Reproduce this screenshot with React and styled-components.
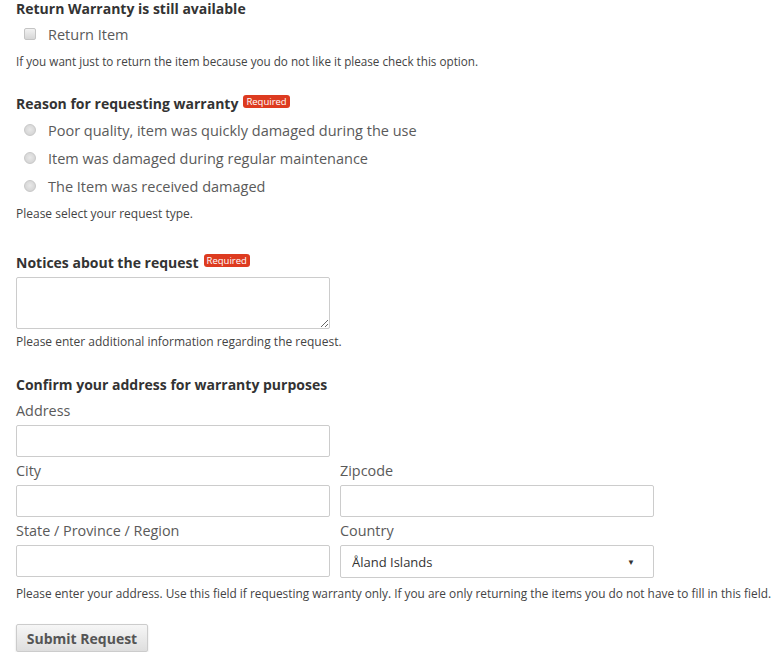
import React, { useState } from "react";
import styled, { createGlobalStyle } from "styled-components";

const GlobalStyle = createGlobalStyle`
  body {
    margin: 0;
    background: #fff;
    font-family: "Open Sans", "Liberation Sans", sans-serif;
    color: #333;
  }
`;

const reasons = [
  "Poor quality, item was quickly damaged during the use",
  "Item was damaged during regular maintenance",
  "The Item was received damaged",
];

const countries = ["Åland Islands", "Albania", "Algeria", "Andorra"];

const App = () => {
  const [reason, setReason] = useState("");
  const [returnItem, setReturnItem] = useState(false);
  const [country, setCountry] = useState(countries[0]);

  return (
    <>
      <GlobalStyle />
      <Form onSubmit={(e) => e.preventDefault()}>
        <Section $gap={26}>
          <Heading>Return Warranty is still available</Heading>
          <CheckRow>
            <Checkbox
              type="checkbox"
              checked={returnItem}
              onChange={(e) => setReturnItem(e.target.checked)}
            />
            <OptionText>Return Item</OptionText>
          </CheckRow>
          <Help $top={9} $size={11.7}>
            If you want just to return the item because you do not like it
            please check this option.
          </Help>
        </Section>

        <Section $gap={32}>
          <Heading>
            Reason for requesting warranty <Badge>Required</Badge>
          </Heading>
          <RadioList>
            {reasons.map((r) => (
              <RadioRow key={r}>
                <Radio
                  type="radio"
                  name="reason"
                  checked={reason === r}
                  onChange={() => setReason(r)}
                />
                <OptionText>{r}</OptionText>
              </RadioRow>
            ))}
          </RadioList>
          <Help $top={6}>Please select your request type.</Help>
        </Section>

        <Section $gap={26}>
          <Heading>
            Notices about the request <Badge>Required</Badge>
          </Heading>
          <TextArea />
          <Help $top={5}>
            Please enter additional information regarding the request.
          </Help>
        </Section>

        <Section $gap={23}>
          <Heading>Confirm your address for warranty purposes</Heading>
          <FieldGrid>
            <Field>
              <FieldLabel>Address</FieldLabel>
              <Input type="text" />
            </Field>
            <Spacer />
            <Field>
              <FieldLabel>City</FieldLabel>
              <Input type="text" />
            </Field>
            <Field>
              <FieldLabel>Zipcode</FieldLabel>
              <Input type="text" />
            </Field>
            <Field>
              <FieldLabel>State / Province / Region</FieldLabel>
              <Input type="text" />
            </Field>
            <Field>
              <FieldLabel>Country</FieldLabel>
              <SelectWrap>
                <Select
                  value={country}
                  onChange={(e) => setCountry(e.target.value)}
                >
                  {countries.map((c) => (
                    <option key={c}>{c}</option>
                  ))}
                </Select>
                <Arrow>▼</Arrow>
              </SelectWrap>
            </Field>
          </FieldGrid>
          <Help $top={7} $size={11.85} $nowrap>
            Please enter your address. Use this field if requesting warranty
            only. If you are only returning the items you do not have to fill
            in this field.
          </Help>
        </Section>

        <SubmitButton type="submit">Submit Request</SubmitButton>
      </Form>
    </>
  );
};

export default App;

// Styled-components

const Form = styled.form`
  padding: 0 0 0 16px;
  display: flex;
  flex-direction: column;
`;

const Section = styled.div`
  display: flex;
  flex-direction: column;
  margin-bottom: ${(p) => p.$gap}px;
`;

const Heading = styled.h3`
  margin: 0;
  font-size: 14px;
  line-height: 18px;
  font-weight: 700;
  color: #333;
  display: flex;
  align-items: flex-start;
  gap: 5px;
`;

const Badge = styled.span`
  display: inline-block;
  background: #dd3b20;
  color: #fff;
  font-size: 9.5px;
  font-weight: 400;
  line-height: 13px;
  padding: 0 3px;
  border-radius: 3px;
`;

const CheckRow = styled.label`
  display: flex;
  align-items: center;
  height: 20px;
  margin-top: 6px;
  padding-left: 8px;
`;

const RadioList = styled.div`
  display: flex;
  flex-direction: column;
  margin-top: 3px;
`;

const RadioRow = styled.label`
  display: flex;
  align-items: center;
  height: 28px;
  padding-left: 8px;
`;

const Checkbox = styled.input`
  appearance: none;
  margin: 0 12px 0 0;
  width: 12px;
  height: 12px;
  border: 1px solid #c4c4c4;
  border-radius: 2px;
  background: linear-gradient(#f2f2f2, #d6d6d6);
`;

const Radio = styled.input`
  appearance: none;
  margin: 0 12px 0 0;
  width: 12px;
  height: 12px;
  border: 1px solid #c8c8c8;
  border-radius: 50%;
  background: radial-gradient(circle at 50% 45%, #e8e8e8, #cfcfcf);
`;

const OptionText = styled.span`
  font-size: 14.5px;
  font-weight: 400;
  color: #5a5a5a;
`;

const Help = styled.p`
  margin: ${(p) => p.$top}px 0 0;
  font-size: ${(p) => p.$size || 12}px;
  line-height: 16px;
  color: #444;
  white-space: ${(p) => (p.$nowrap ? "nowrap" : "normal")};
`;

const TextArea = styled.textarea`
  box-sizing: border-box;
  width: 314px;
  height: 52px;
  margin-top: 5px;
  border: 1px solid #ccc;
  border-radius: 2px;
  font-family: inherit;
`;

const FieldGrid = styled.div`
  display: grid;
  grid-template-columns: 314px 314px;
  column-gap: 10px;
  row-gap: 4px;
  margin-top: 7px;
`;

const Field = styled.div`
  display: flex;
  flex-direction: column;
  gap: 4px;
`;

const Spacer = styled.div``;

const FieldLabel = styled.label`
  font-size: 14.4px;
  line-height: 20px;
  font-weight: 400;
  color: #5a5a5a;
`;

const Input = styled.input`
  box-sizing: border-box;
  width: 314px;
  height: 32px;
  border: 1px solid #ccc;
  border-radius: 2px;
  font-family: inherit;
`;

const SelectWrap = styled.div`
  position: relative;
  width: 314px;
`;

const Select = styled.select`
  appearance: none;
  box-sizing: border-box;
  width: 314px;
  height: 33px;
  border: 1px solid #ccc;
  border-radius: 2px;
  background: #fff;
  padding: 0 11px;
  font-family: inherit;
  font-size: 13px;
  color: #333;
`;

const Arrow = styled.span`
  position: absolute;
  right: 19px;
  top: 11px;
  font-size: 8px;
  color: #333;
  pointer-events: none;
`;

const SubmitButton = styled.button`
  align-self: flex-start;
  width: 132px;
  height: 28px;
  padding: 0;
  border: 1px solid #ccc;
  border-radius: 2px;
  background: linear-gradient(#f6f6f6, #dedede);
  box-shadow: 0 1px 2px rgba(0, 0, 0, 0.15);
  font-family: inherit;
  font-size: 14px;
  font-weight: 700;
  color: #555;
  cursor: pointer;
`;
